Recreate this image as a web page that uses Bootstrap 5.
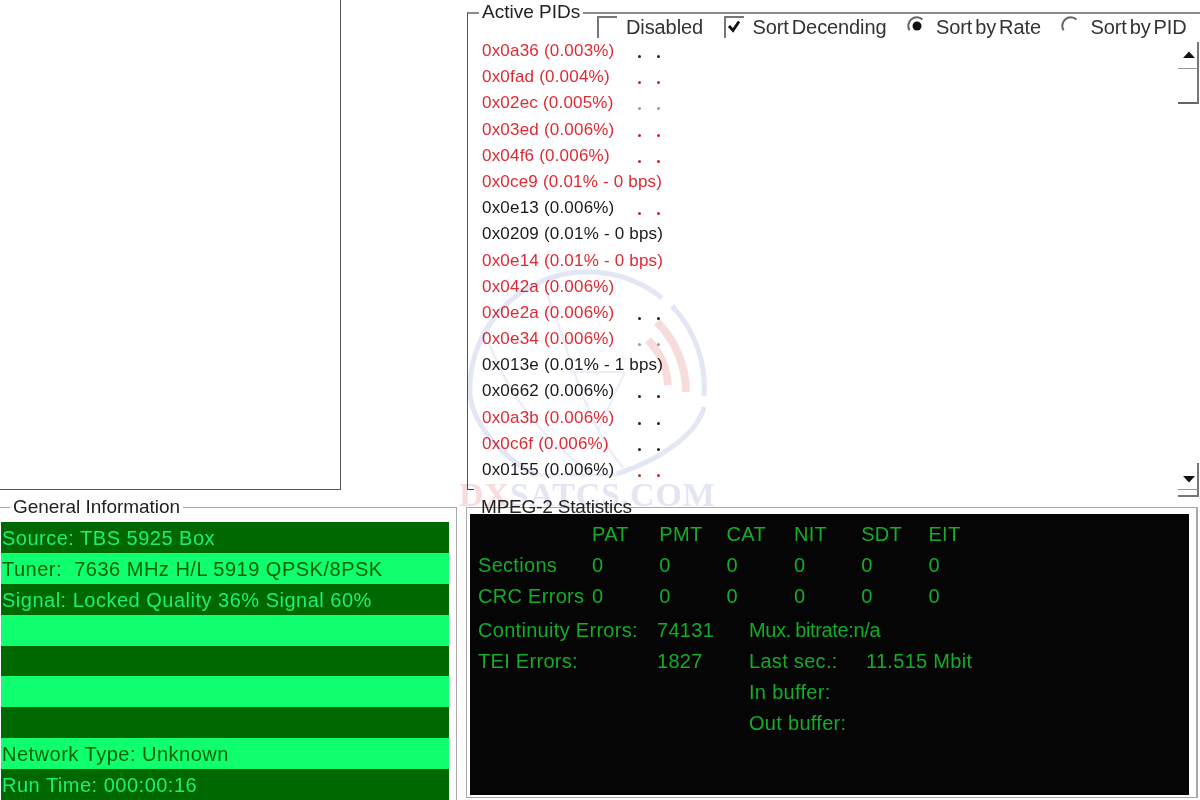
<!DOCTYPE html>
<html lang="en">
<head>
<meta charset="utf-8">
<title>Signal Statistics</title>
<link href="https://cdn.jsdelivr.net/npm/bootstrap@5.3.0/dist/css/bootstrap.min.css" rel="stylesheet">
<style>
html,body{height:800px;overflow:hidden;background:#fff}
body{font-family:"Liberation Sans",Arial,sans-serif;color:#222;position:relative;width:1200px;filter:blur(.3px)}
.leftcol{width:457px;flex:none}
.rightcol{width:734px;flex:none;margin-left:9px}
.blankpane{width:341px;height:490px;border-right:1px solid #555;border-bottom:1px solid #555}
.groupbox{position:relative;border:0 solid #a8a8a8;border-top-width:1px}
.grouptag{position:absolute;top:-12px;background:#fff;padding:0 3px;font-size:19px;line-height:22px;white-space:nowrap;color:#222}
.infobox{margin-top:17px;height:293px;padding-top:14px;border-right-width:1px}
.infobox .grouptag{left:10px;letter-spacing:-.05px}
.infoband{height:30.9px;width:448px;margin-left:1px;padding-left:1px;font-size:20px;line-height:32px;white-space:pre;letter-spacing:.5px}
.bandlight{background:#10ff70;color:#006400}
.banddark{background:#006800;color:#1af078}
.pidbox{margin:12px 0 0 1px;height:478px;width:733px;border-top:2px solid #8a8a8a;border-left:1px solid #555}
.pidbox::after{content:"";position:absolute;left:0;bottom:0;width:6px;height:1px;background:#444}
.pidbox .grouptag{left:11px;top:-13px}
.pidopts{height:24px;padding-left:129px;font-size:20px;line-height:26px;gap:20.5px;letter-spacing:-.1px;word-spacing:-2.5px;color:#333}
.pidopt{gap:9px;height:26px}
.pidopt svg{flex:none}
.pidbody{height:452px}
.pidlist{padding-left:14px;flex:1}
.pidrow{height:26.2px;font-size:17px;line-height:26px;white-space:nowrap;color:#1a1a1a;letter-spacing:.2px}
.pidrow.isred{color:#de2a34}
.pidlabel{width:156px;flex:none}
.piddots{gap:16px;padding-top:17px}
.piddots i{display:block;width:3px;height:3px;border-radius:50%;background:#222}
.piddots.faint i{background:#999}
.piddots.redmark i{background:#d02030}
.scrollrail{width:21px;flex:none;margin-right:1px;padding-top:4px;height:459px}
.scrollbtn{height:27px;border-right:2px solid #777;border-bottom:1px solid #999}
.scrollthumb{height:35px;border-right:2px solid #777;border-bottom:2px solid #666}
.scrollbtn svg{display:block}
.scrolltail{height:7px;border-right:2px solid #777;border-bottom:2px solid #777}
.statsbox{margin-top:17px;width:732px;height:291px;padding:6px 7px 0 3px;border-left-width:1px;border-right-width:2px;border-bottom-width:1px}
.statsbox .grouptag{left:11px;top:-12px;z-index:1;background:transparent;letter-spacing:-.2px}
.statsscreen{background:#050505;height:281px;padding:5px 0 0 8px;color:#14ac28;font-size:20px;line-height:31px;letter-spacing:.3px;white-space:nowrap}
.statsgrid{display:grid;grid-template-columns:114px repeat(6,67.3px)}
.statsgrid2{display:grid;grid-template-columns:179px 92px 117px 200px;margin-top:3px}
.tightcell{grid-column:3 / span 2;letter-spacing:-.35px;word-spacing:-1px}
.wmark{position:absolute;left:0;top:0;pointer-events:none;mix-blend-mode:multiply}
.wmarktext{font-family:"Liberation Serif",serif;font-weight:700;font-size:34px;letter-spacing:.8px}
</style>
</head>
<body>
<div class="d-flex">
  <div class="leftcol">
    <div class="blankpane"></div>
    <div class="groupbox infobox">
      <div class="grouptag">General Information</div>
      <div>
        <div class="infoband banddark">Source: TBS 5925 Box</div>
        <div class="infoband bandlight">Tuner:  7636 MHz H/L 5919 QPSK/8PSK</div>
        <div class="infoband banddark">Signal: Locked Quality 36% Signal 60%</div>
        <div class="infoband bandlight"></div>
        <div class="infoband banddark"></div>
        <div class="infoband bandlight"></div>
        <div class="infoband banddark"></div>
        <div class="infoband bandlight">Network Type: Unknown</div>
        <div class="infoband banddark">Run Time: 000:00:16</div>
      </div>
    </div>
  </div>
  <div class="rightcol">
    <div class="groupbox pidbox">
      <div class="grouptag">Active PIDs</div>
      <div class="d-flex pidopts">
        <div class="d-flex align-items-center pidopt"><svg width="20" height="22" viewBox="0 0 20 22"><path d="M1 22V1H20" fill="none" stroke="#777" stroke-width="2"/></svg><span>Disabled</span></div>
        <div class="d-flex align-items-center pidopt"><svg width="20" height="22" viewBox="0 0 20 22"><path d="M1 22V1H20" fill="none" stroke="#777" stroke-width="2"/><path d="M5 10l4 4.500 6-9" fill="none" stroke="#111" stroke-width="2.800"/></svg><span>Sort Decending</span></div>
        <div class="d-flex align-items-center pidopt"><svg width="20" height="22" viewBox="0 0 20 22"><path d="M15.500 3.500A8.500 8.500 0 0 0 2.600 14.300" fill="none" stroke="#666" stroke-width="2"/><circle cx="10" cy="10" r="4.500" fill="#111"/></svg><span>Sort by Rate</span></div>
        <div class="d-flex align-items-center pidopt"><svg width="20" height="22" viewBox="0 0 20 22"><path d="M15.500 3.500A8.500 8.500 0 0 0 2.600 14.300" fill="none" stroke="#666" stroke-width="2"/></svg><span>Sort by PID</span></div>
      </div>
      <div class="d-flex pidbody">
        <div class="pidlist">
          <div class="pidrow isred d-flex"><span class="pidlabel">0x0a36 (0.003%)</span><span class="d-flex piddots"><i></i><i></i></span></div>
          <div class="pidrow isred d-flex"><span class="pidlabel">0x0fad (0.004%)</span><span class="d-flex piddots redmark"><i></i><i></i></span></div>
          <div class="pidrow isred d-flex"><span class="pidlabel">0x02ec (0.005%)</span><span class="d-flex piddots faint"><i></i><i></i></span></div>
          <div class="pidrow isred d-flex"><span class="pidlabel">0x03ed (0.006%)</span><span class="d-flex piddots redmark"><i></i><i></i></span></div>
          <div class="pidrow isred d-flex"><span class="pidlabel">0x04f6 (0.006%)</span><span class="d-flex piddots redmark"><i></i><i></i></span></div>
          <div class="pidrow isred d-flex"><span class="pidlabel">0x0ce9 (0.01% - 0 bps)</span></div>
          <div class="pidrow d-flex"><span class="pidlabel">0x0e13 (0.006%)</span><span class="d-flex piddots redmark"><i></i><i></i></span></div>
          <div class="pidrow d-flex"><span class="pidlabel">0x0209 (0.01% - 0 bps)</span></div>
          <div class="pidrow isred d-flex"><span class="pidlabel">0x0e14 (0.01% - 0 bps)</span></div>
          <div class="pidrow isred d-flex"><span class="pidlabel">0x042a (0.006%)</span></div>
          <div class="pidrow isred d-flex"><span class="pidlabel">0x0e2a (0.006%)</span><span class="d-flex piddots"><i></i><i></i></span></div>
          <div class="pidrow isred d-flex"><span class="pidlabel">0x0e34 (0.006%)</span><span class="d-flex piddots faint"><i></i><i></i></span></div>
          <div class="pidrow d-flex"><span class="pidlabel">0x013e (0.01% - 1 bps)</span></div>
          <div class="pidrow d-flex"><span class="pidlabel">0x0662 (0.006%)</span><span class="d-flex piddots"><i></i><i></i></span></div>
          <div class="pidrow isred d-flex"><span class="pidlabel">0x0a3b (0.006%)</span><span class="d-flex piddots"><i></i><i></i></span></div>
          <div class="pidrow isred d-flex"><span class="pidlabel">0x0c6f (0.006%)</span><span class="d-flex piddots"><i></i><i></i></span></div>
          <div class="pidrow d-flex"><span class="pidlabel">0x0155 (0.006%)</span><span class="d-flex piddots redmark"><i></i><i></i></span></div>
        </div>
        <div class="scrollrail d-flex flex-column">
          <div class="scrollbtn"><svg width="19" height="26" viewBox="0 0 19 26"><path d="M5 16l6-6.500 6 6.500z" fill="#111"/></svg></div>
          <div class="scrollthumb"></div>
          <div class="flex-grow-1"></div>
          <div class="scrollbtn"><svg width="19" height="26" viewBox="0 0 19 26"><path d="M5 13l6 6.500 6-6.500z" fill="#111"/></svg></div>
          <div class="scrolltail"></div>
        </div>
      </div>
    </div>
    <div class="groupbox statsbox">
      <div class="grouptag">MPEG-2 Statistics</div>
      <div class="statsscreen">
        <div class="statsgrid">
          <span></span><span>PAT</span><span>PMT</span><span>CAT</span><span>NIT</span><span>SDT</span><span>EIT</span>
          <span>Sections</span><span>0</span><span>0</span><span>0</span><span>0</span><span>0</span><span>0</span>
          <span>CRC Errors</span><span>0</span><span>0</span><span>0</span><span>0</span><span>0</span><span>0</span>
        </div>
        <div class="statsgrid2">
          <span>Continuity Errors:</span><span>74131</span><span class="tightcell">Mux. bitrate:n/a</span>
          <span>TEI Errors:</span><span>1827</span><span>Last sec.:</span><span>11.515 Mbit</span>
          <span></span><span></span><span>In buffer:</span><span></span>
          <span></span><span></span><span>Out buffer:</span><span></span>
        </div>
      </div>
    </div>
  </div>
</div>
<svg class="wmark" width="1200" height="800" viewBox="0 0 1200 800" aria-hidden="true">
  <path d="M662 298A118 118 0 0 0 470 396C474 425 500 455 535 475" fill="none" stroke="#e3e6f5" stroke-width="5"/>
  <path d="M672 306A118 118 0 0 1 704 396" fill="none" stroke="#e3e6f5" stroke-width="5"/>
  <path d="M704 407C698 432 665 458 617 474" fill="none" stroke="#e3e6f5" stroke-width="5"/>
  <path d="M535 475H617" fill="none" stroke="#eceef8" stroke-width="3"/>
  <path d="M657 322A100 100 0 0 1 686 392" fill="none" stroke="#f8dcdc" stroke-width="8"/>
  <path d="M648 340A72 72 0 0 1 668 385" fill="none" stroke="#f8dcdc" stroke-width="8"/>
  <path d="M545 290C565 330 580 420 625 470M490 345C510 400 550 445 590 472" fill="none" stroke="#eceef8" stroke-width="2.500"/>
  <path d="M625 372L570 372M625 372L598 430" fill="none" stroke="#eceef8" stroke-width="2"/>
  <text x="459" y="506" class="wmarktext"><tspan fill="#f8dcdc">DX</tspan><tspan fill="#e3e5f3">SATCS.COM</tspan></text>
</svg>
</body>
</html>
